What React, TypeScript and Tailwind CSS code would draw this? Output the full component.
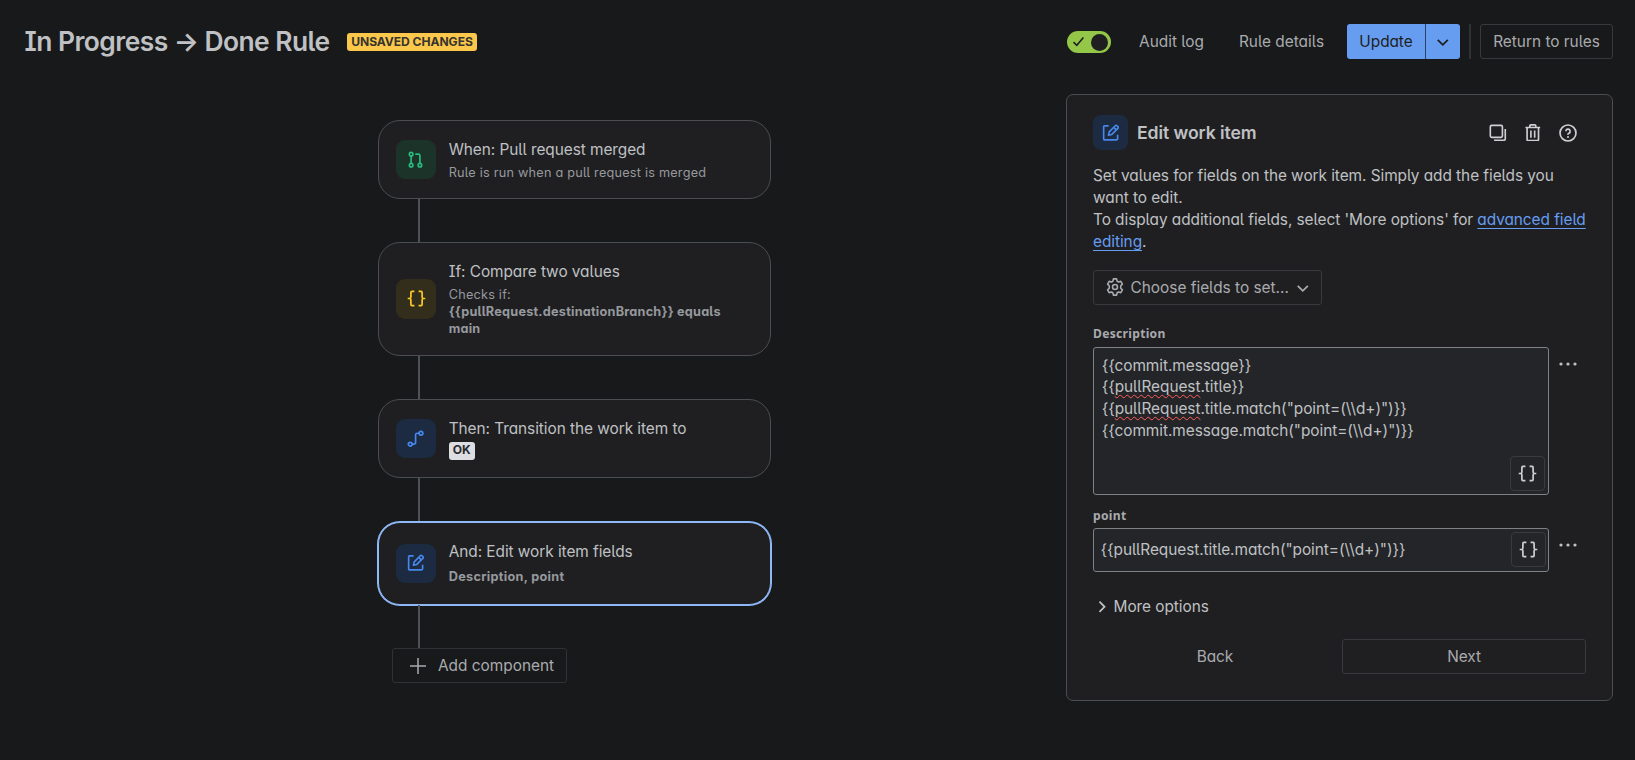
import React from "react";
import type { ReactNode } from "react";

const SANS =
  "font-['Inter',sans-serif] [font-feature-settings:'cv11','ss02'] tracking-[-0.055px]";

function PullRequestIcon() {
  return (
    <svg width="17.6" height="17.6" viewBox="0 0 16 16" fill="none" stroke="currentColor" strokeWidth="1.5">
      <circle cx="3.75" cy="2.9" r="1.6" />
      <circle cx="3.75" cy="12.9" r="1.6" />
      <circle cx="11.75" cy="12.9" r="1.6" />
      <path d="M3.75 4.5v6.8M7.5 2.9h2.75a1.5 1.5 0 0 1 1.5 1.5v6.9" />
    </svg>
  );
}

function TransitionIcon() {
  return (
    <svg width="17.6" height="17.6" viewBox="0 0 16 16" fill="none" stroke="currentColor" strokeWidth="1.5">
      <circle cx="2.9" cy="12.9" r="1.7" />
      <circle cx="12.7" cy="3" r="1.7" />
      <path d="M4.6 12.9h1.7a1.5 1.5 0 0 0 1.5-1.5V4.5A1.5 1.5 0 0 1 9.3 3H11" />
    </svg>
  );
}

function EditIcon() {
  return (
    <svg width="17.6" height="17.6" viewBox="0 0 16 16" fill="none" stroke="currentColor" strokeWidth="1.5">
      <path d="M6 1.7H2.4a.9.9 0 0 0-.9.9v10.9a.9.9 0 0 0 .9.9h10.9a.9.9 0 0 0 .9-.9V9.7" />
      <path d="M5.9 10.2l.7-3.1 5.5-5.5a1.1 1.1 0 0 1 1.55 0l.8.8a1.1 1.1 0 0 1 0 1.55L8.9 9.5l-3 .7z" strokeLinejoin="round" />
      <path d="M10.7 3.1l2.3 2.3" />
    </svg>
  );
}

function BracesIcon() {
  return (
    <svg className="mb-[1px]" width="19" height="17" viewBox="0 0 19 17" fill="none" stroke="currentColor" strokeWidth="1.7">
      <path d="M7.4 1.4H4.9a1 1 0 0 0-1 1v4.5c0 1-.6 1.6-1.6 1.6H.7h1.6c1 0 1.6.6 1.6 1.6v4.5a1 1 0 0 0 1 1h2.5" />
      <path d="M11.6 1.4h2.5a1 1 0 0 1 1 1v4.5c0 1 .6 1.6 1.6 1.6h1.6-1.6c-1 0-1.6.6-1.6 1.6v4.5a1 1 0 0 1-1 1h-2.5" />
    </svg>
  );
}

function ChevronDown() {
  return (
    <svg width="17.6" height="17.6" viewBox="0 0 16 16" fill="none" stroke="currentColor" strokeWidth="1.6">
      <path d="M3.4 6.2 8 10.8l4.6-4.6" />
    </svg>
  );
}

function GearIcon() {
  return (
    <svg className="-mt-[1px]" width="18" height="18" viewBox="0 0 16 16" fill="none" stroke="currentColor" strokeWidth="1.4" strokeLinejoin="round">
      <path d="M6.6.8h2.8l.5 2.1 1.2.7 2.1-.6 1.4 2.4-1.5 1.5v2.2l1.5 1.5-1.4 2.4-2.1-.6-1.2.7-.5 2.1H6.6l-.5-2.1-1.2-.7-2.1.6-1.4-2.4 1.5-1.5V6.9L1.4 5.4 2.8 3l2.1.6 1.2-.7z" />
      <circle cx="8" cy="8" r="2.2" />
    </svg>
  );
}

function CopyIcon() {
  return (
    <svg width="17.6" height="17.6" viewBox="0 0 16 16" fill="none" stroke="currentColor" strokeWidth="1.5">
      <rect x="1.2" y="1.2" width="11" height="11" rx="1.2" />
      <path d="M14.8 4.6v9a1.2 1.2 0 0 1-1.2 1.2h-9" />
    </svg>
  );
}

function TrashIcon() {
  return (
    <svg width="17.6" height="17.6" viewBox="0 0 16 16" fill="none" stroke="currentColor" strokeWidth="1.5">
      <path d="M1.3 3.2h13.4M5.3 3V1.6a.8.8 0 0 1 .8-.8h3.8a.8.8 0 0 1 .8.8V3M2.8 3.4v10.7a1 1 0 0 0 1 1h8.4a1 1 0 0 0 1-1V3.4M6.3 5.8v6.8M9.7 5.8v6.8" />
    </svg>
  );
}

function HelpIcon() {
  return (
    <svg width="18" height="18" viewBox="0 0 16 16" fill="none" stroke="currentColor" strokeWidth="1.5">
      <circle cx="8" cy="8" r="7.1" />
      <path d="M6.1 6.4a1.9 1.9 0 1 1 2.7 1.8c-.5.25-.8.55-.8 1.2v.2" />
      <circle cx="8" cy="11.6" r=".9" fill="currentColor" stroke="none" />
    </svg>
  );
}

function DotsIcon() {
  return (
    <svg className="mr-[1px] mb-[2px]" width="18" height="4" viewBox="0 0 18 4" fill="currentColor">
      <circle cx="2" cy="2" r="1.6" />
      <circle cx="9" cy="2" r="1.6" />
      <circle cx="16" cy="2" r="1.6" />
    </svg>
  );
}

interface CardProps {
  className: string;
  iconClass: string;
  icon: ReactNode;
  title: string;
  children: ReactNode;
}

function RuleCard({ className, iconClass, icon, title, children }: CardProps) {
  return (
    <div className={`flex w-[393px] items-center rounded-[22px] border bg-[#1f1f21] pl-[17px] ${className}`}>
      <div className={`flex w-10 shrink-0 items-center justify-center rounded-[9px] ${iconClass}`}>{icon}</div>
      <div className="ml-[12.7px] w-[290px]">
        <div className="text-[15.4px] leading-[22px] text-[#bfc1c4]">{title}</div>
        {children}
      </div>
    </div>
  );
}

function Connector({ className }: { className: string }) {
  return <div className={`ml-[40px] w-[2px] bg-[#505154] ${className}`} />;
}

function BracesButton() {
  return (
    <button className="flex h-[35px] w-[35px] items-center justify-center rounded-[4px] border border-[#3a3b3f] bg-[#242528] pr-[1px] text-[#cecfd2]">
      <BracesIcon />
    </button>
  );
}

function Misspelled({ children }: { children: ReactNode }) {
  return (
    <span className="underline decoration-[#ff5f57] decoration-wavy decoration-[1.3px] underline-offset-[2px] [text-decoration-skip-ink:none]">
      {children}
    </span>
  );
}

function Header() {
  return (
    <header className="flex h-[84px] shrink-0 items-center pr-[22px] pb-[1px] pl-[24.5px] text-[15.4px] text-[#a9abaf]">
      <h1 className="w-[305.5px] pt-[1px] text-[26.4px] font-semibold tracking-[-0.54px] whitespace-nowrap text-[#bfc1c4]">
        In Progress → Done Rule
      </h1>
      <span className="mt-[1px] ml-[17px] flex h-[18px] w-[130px] items-center justify-center rounded-[3px] bg-[#fcc84c] text-[12.1px] font-bold whitespace-nowrap text-[#36342c]">
        UNSAVED CHANGES
      </span>
      <div className="mt-[1px] ml-auto flex h-[22px] w-[44px] items-center justify-between rounded-full bg-[#94c748] pr-[3px] pl-[5px] text-[#1f1f21]">
        <svg width="14" height="14" viewBox="0 0 14 14" fill="none" stroke="currentColor" strokeWidth="1.6">
          <path d="M1.5 7.2 4.8 10.3 11.4 2.6" />
        </svg>
        <span className="h-[17px] w-[17px] rounded-full bg-[#1f1f21]" />
      </div>
      <button className="ml-[16px] h-[35px] w-[89px] tracking-[0px]">Audit log</button>
      <button className="ml-[11px] h-[35px] w-[109px] tracking-[0px]">Rule details</button>
      <button className="ml-[11px] h-[35px] w-[78px] rounded-l-[3px] bg-[#669df1] text-[#1f1f21]">Update</button>
      <button className="flex h-[35px] w-[35px] items-center justify-center rounded-r-[3px] border-l border-[#2c4166] bg-[#669df1] text-[#1f1f21]">
        <ChevronDown />
      </button>
      <span className="ml-[9px] h-[35px] w-[2px] bg-[#303134]" />
      <button className="ml-[9px] h-[35px] w-[133px] rounded-[3px] border border-[#38393c] tracking-[0px]">Return to rules</button>
    </header>
  );
}

function RuleFlow() {
  return (
    <div className="flex flex-col pt-[36px] pl-[378px]">
      <RuleCard
        className="h-[79px] border-[#4b4d51]"
        iconClass="h-[39px] bg-[#1c3329] text-[#2abb7f]"
        icon={<PullRequestIcon />}
        title="When: Pull request merged"
      >
        <div className="mt-[3px] text-[12.7px] leading-[17px] tracking-[0.22px] text-[#96999e]">
          Rule is run when a pull request is merged
        </div>
      </RuleCard>
      <Connector className="h-[43px]" />
      <RuleCard
        className="h-[114px] border-[#4b4d51]"
        iconClass="h-10 bg-[#332e1b] text-[#fbc828]"
        icon={<BracesIcon />}
        title="If: Compare two values"
      >
        <div className="mt-[3px] mb-[1px] text-[12.7px] leading-[17px] tracking-[0.22px] text-[#96999e]">
          Checks if:
          <div className="font-bold">
            {"{{pullRequest.destinationBranch}} equals"}
            <br />
            main
          </div>
        </div>
      </RuleCard>
      <Connector className="h-[43px]" />
      <RuleCard
        className="h-[79px] border-[#4b4d51]"
        iconClass="h-[39px] bg-[#1c2b42] text-[#4688ec]"
        icon={<TransitionIcon />}
        title="Then: Transition the work item to"
      >
        <span className="mt-[2px] flex h-[18px] w-[26px] items-center justify-center rounded-[3px] bg-[#dddee1] text-[12.1px] font-bold text-[#292a2e]">
          OK
        </span>
      </RuleCard>
      <Connector className="h-[44px]" />
      <RuleCard
        className="h-[83px] border-[#8fb8f6] pb-[1px] shadow-[0_0_0_1px_#8fb8f6]"
        iconClass="h-[39px] bg-[#1c2b42] text-[#4688ec]"
        icon={<EditIcon />}
        title="And: Edit work item fields"
      >
        <div className="mt-[5px] mb-[1px] text-[12.7px] leading-[17px] font-bold tracking-[0.3px] text-[#96999e]">
          Description, point
        </div>
      </RuleCard>
      <Connector className="h-[43px]" />
      <button className="ml-[14px] flex h-[35px] w-[175px] items-center rounded-[3px] border border-[#303134] pl-[17px] text-[15.4px] tracking-[0px] text-[#a9abaf]">
        <svg width="16" height="16" viewBox="0 0 16 16" stroke="currentColor" strokeWidth="1.5">
          <path d="M8 0v16M0 8h16" />
        </svg>
        <span className="ml-[12px]">Add component</span>
      </button>
    </div>
  );
}

const FIELD_LABEL =
  "font-['Noto_Sans',sans-serif] text-[12.1px] leading-[18px] font-bold tracking-[0.3px] text-[#a9abaf]";

function EditPanel() {
  return (
    <aside className="mt-[10px] mr-[22px] ml-auto h-[607px] w-[547px] shrink-0 rounded-[7px] border border-[#4b4d51] bg-[#1f1f21] px-[26px] pt-[20px] text-[15.4px] text-[#bfc1c4]">
      <div className="flex h-[35px] items-center">
        <span className="flex h-[35px] w-[35px] items-center justify-center rounded-[8px] bg-[#1c2b42] text-[#4688ec]">
          <EditIcon />
        </span>
        <h2 className="mt-[2px] ml-[9px] text-[17.6px] font-semibold tracking-[-0.08px]">Edit work item</h2>
        <div className="mr-[0.5px] ml-auto flex text-[#cecfd2]">
          <button className="flex h-[35px] w-[35px] items-center justify-center"><CopyIcon /></button>
          <button className="flex h-[35px] w-[35px] items-center justify-center"><TrashIcon /></button>
          <button className="flex h-[35px] w-[35px] items-center justify-center"><HelpIcon /></button>
        </div>
      </div>
      <p className="mt-[15px] text-[15.4px] leading-[22px] whitespace-nowrap">
        Set values for fields on the work item. Simply add the fields you
        <br />
        want to edit.
        <br />
        To display additional fields, select 'More options' for{" "}
        <a className="text-[#669df1] underline decoration-1 underline-offset-[3px] [text-decoration-skip-ink:none]">
          advanced field
          <br />
          editing
        </a>
        .
      </p>
      <button className="mt-[17px] flex h-[35px] w-[229px] items-center rounded-[3px] border border-[#38393c] pl-[12px] text-[#a9abaf]">
        <GearIcon />
        <span className="ml-[6.5px] tracking-[0px]">Choose fields to set...</span>
        <span className="ml-[5px]"><ChevronDown /></span>
      </button>
      <div className={`mt-[20px] ${FIELD_LABEL}`}>Description</div>
      <div className="mt-[4px] flex">
        <div className="relative h-[148px] w-[456px] rounded-[3px] border border-[#7e8188] bg-[#242528] pt-[6.5px] pl-[7.7px] leading-[21.7px]">
          <div>{"{{commit.message}}"}</div>
          <div>
            {"{{"}
            <Misspelled>pullRequest</Misspelled>
            {".title}}"}
          </div>
          <div>
            {"{{"}
            <Misspelled>pullRequest</Misspelled>
            {'.title.match("point=(\\\\d+)")}}'}
          </div>
          <div>{'{{commit.message.match("point=(\\\\d+)")}}'}</div>
          <div className="absolute right-[3px] bottom-[3px]">
            <BracesButton />
          </div>
        </div>
        <button className="ml-auto flex h-[35px] w-[35px] items-center justify-center"><DotsIcon /></button>
      </div>
      <div className={`mt-[12px] ${FIELD_LABEL}`}>point</div>
      <div className="mt-[3px] flex">
        <div className="flex h-[44px] w-[456px] items-center justify-between rounded-[3px] border border-[#7e8188] bg-[#242528] pr-[2px] pb-[1px] pl-[6.5px]">
          <span>{'{{pullRequest.title.match("point=(\\\\d+)")}}'}</span>
          <BracesButton />
        </div>
        <button className="ml-auto flex h-[36px] w-[35px] items-center justify-center"><DotsIcon /></button>
      </div>
      <button className="mt-[24px] flex h-[22px] items-center">
        <svg width="17.6" height="17.6" viewBox="0 0 16 16" fill="none" stroke="currentColor" strokeWidth="1.6">
          <path d="M5.9 3.4 10.5 8l-4.6 4.6" />
        </svg>
        <span className="ml-[3px]">More options</span>
      </button>
      <div className="mt-[21px] flex gap-[5px] text-[#a9abaf]">
        <button className="h-[35px] flex-1">Back</button>
        <button className="h-[35px] w-[244px] rounded-[3px] border border-[#38393c]">Next</button>
      </div>
    </aside>
  );
}

export default function App() {
  return (
    <div className={`flex h-[760px] w-[1635px] flex-col overflow-hidden bg-[#18191a] ${SANS}`}>
      <Header />
      <main className="flex min-h-0 flex-1 items-start">
        <RuleFlow />
        <EditPanel />
      </main>
    </div>
  );
}
